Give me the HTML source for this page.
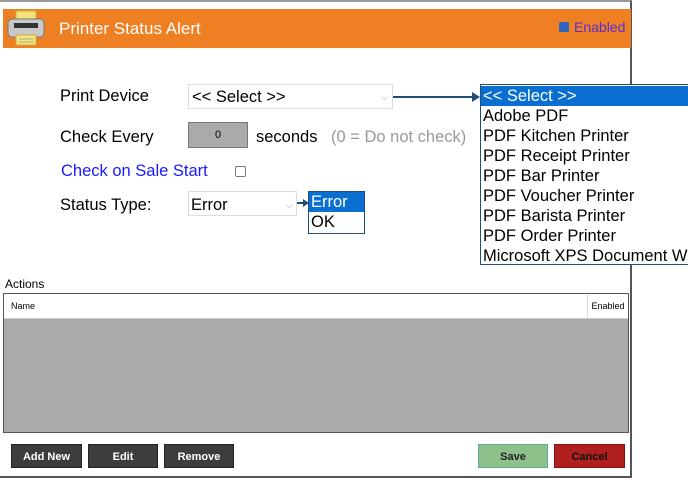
<!DOCTYPE html><html><head><style>
body{margin:0;width:688px;height:480px;background:#fff;position:relative;overflow:hidden;font-family:"Liberation Sans",sans-serif}
.a{position:absolute}
.btn{position:absolute;top:444px;height:24px;width:70px;background:#3d3d3d;color:#fff;font-size:11px;font-weight:bold;text-align:center;line-height:24px;border:1px solid #222;box-sizing:border-box}
.li{height:20px;line-height:20px;font-size:16.5px;padding-left:2px;white-space:nowrap}
.lb{font-size:16.5px}
</style></head><body>
<div class="a" style="left:0;top:0;width:632px;height:478px;border-right:2px solid #555;border-bottom:2px solid #555;border-top:2px solid #999;box-sizing:border-box"></div>
<div class="a" style="left:3px;top:9px;width:628px;height:39px;background:#ee7f22"></div>
<svg class="a" style="left:6px;top:10px" width="40" height="36" viewBox="0 0 40 36">
<rect x="10" y="1" width="20" height="10" fill="#f5e27a" stroke="#c9b040"/>
<rect x="2" y="9" width="36" height="18" rx="4" fill="#c8c8c8" stroke="#777"/>
<rect x="8" y="13" width="24" height="5" fill="#333"/>
<rect x="10" y="25" width="20" height="10" fill="#f5e27a" stroke="#c9b040"/>
<line x1="13" y1="29" x2="27" y2="29" stroke="#aa9" /><line x1="13" y1="32" x2="27" y2="32" stroke="#aa9"/>
</svg>
<div class="a" style="left:59px;top:19px;color:#fff;font-size:17px">Printer Status Alert</div>
<div class="a" style="left:559px;top:22px;width:10px;height:10px;background:#2a66c0;border-radius:2px"></div>
<div class="a" style="left:574px;top:19px;color:#5b2bd6;font-size:14px">Enabled</div>

<div class="a lb" style="left:60px;top:87px">Print Device</div>
<div class="a" style="left:188px;top:84px;width:205px;height:25px;border:1px solid #ddd;box-sizing:border-box;font-size:16.5px;line-height:25px;padding-left:3px">&lt;&lt; Select &gt;&gt;<span style="position:absolute;right:4px;top:0;font-size:9px;color:#999">⌵</span></div>
<div class="a" style="left:393px;top:96px;width:80px;height:2px;background:#1f4e79"></div>
<div class="a" style="left:472px;top:92px;width:0;height:0;border-left:8px solid #1f4e79;border-top:5px solid transparent;border-bottom:5px solid transparent"></div>

<div class="a lb" style="left:60px;top:128px">Check Every</div>
<div class="a" style="left:188px;top:122px;width:60px;height:26px;background:#aaa;border:1px solid #777;box-sizing:border-box;font-size:11px;text-align:center;line-height:24px">0</div>
<div class="a lb" style="left:256px;top:128px">seconds</div>
<div class="a lb" style="left:331px;top:128px;color:#999">(0 = Do not check)</div>

<div class="a lb" style="left:61px;top:162px;color:#1a1aff">Check on Sale Start</div>
<div class="a" style="left:235px;top:166px;width:9px;height:9px;border:1px solid #777;border-radius:2px"></div>

<div class="a lb" style="left:60px;top:196px">Status Type:</div>
<div class="a" style="left:188px;top:191px;width:109px;height:25px;border:1px solid #ddd;box-sizing:border-box;font-size:16.5px;line-height:26px;padding-left:2px">Error<span style="position:absolute;right:3px;top:0;font-size:9px;color:#999">⌵</span></div>
<div class="a" style="left:297px;top:202px;width:8px;height:2px;background:#1f4e79"></div>
<div class="a" style="left:303px;top:199px;border-left:6px solid #1f4e79;border-top:4px solid transparent;border-bottom:4px solid transparent"></div>
<div class="a" style="left:308px;top:191px;width:57px;height:43px;border:1px solid #1f4e79;box-sizing:border-box;background:#fff">
<div class="li" style="background:#0b6fd1;color:#fff;padding-left:2px">Error</div><div class="li">OK</div></div>

<div class="a" style="left:480px;top:84px;width:215px;height:181px;border:1px solid #1f4e79;box-sizing:border-box;background:#fff;overflow:hidden;padding-top:1px">
<div class="li" style="background:#0b6fd1;color:#fff">&lt;&lt; Select &gt;&gt;</div>
<div class="li">Adobe PDF</div><div class="li">PDF Kitchen Printer</div><div class="li">PDF Receipt Printer</div><div class="li">PDF Bar Printer</div><div class="li">PDF Voucher Printer</div><div class="li">PDF Barista Printer</div><div class="li">PDF Order Printer</div><div class="li">Microsoft XPS Document Writer</div></div>

<div class="a" style="left:5px;top:277px;font-size:12px">Actions</div>
<div class="a" style="left:3px;top:293px;width:626px;height:140px;border:1px solid #555;box-sizing:border-box;background:#aaa">
<div style="height:24px;background:#fff;border-bottom:1px solid #ccc;font-size:9px;line-height:24px;position:relative"><span style="margin-left:7px">Name</span><span style="position:absolute;right:0;top:0;width:40px;border-left:1px solid #ddd;text-align:center">Enabled</span></div></div>

<div class="btn" style="left:11px;width:71px">Add New</div>
<div class="btn" style="left:88px">Edit</div>
<div class="btn" style="left:164px">Remove</div>
<div class="btn" style="left:478px;background:#8dc08a;color:#222;border-color:#6a9">Save</div>
<div class="btn" style="left:554px;width:71px;background:#b02020;color:#111;border-color:#811">Cancel</div>
</body></html>
